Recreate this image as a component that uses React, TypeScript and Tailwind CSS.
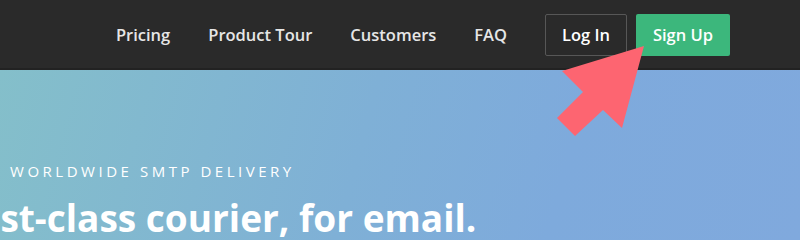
import React from 'react';

const navLinks = ['Pricing', 'Product Tour', 'Customers', 'FAQ'];

export default function App() {
  return (
    <div className="relative w-[800px] h-[240px] overflow-hidden font-['Open_Sans',sans-serif]">
      <header className="h-[70px] bg-[#2a2a2a] border-b-2 border-[#222222] flex items-center justify-end pr-[70px] pt-[2px]">
        <nav className="flex items-center gap-[38px] pt-[1px]">
          {navLinks.map((link) => (
            <a key={link} className="text-[16.5px] font-semibold text-[#e6e6e6] leading-none">
              {link}
            </a>
          ))}
        </nav>
        <div className="flex items-center gap-[9px] ml-[38px]">
          <button className="w-[82px] h-[42px] border border-[#575757] rounded-[2px] text-[16.5px] font-semibold text-white">
            Log In
          </button>
          <button className="w-[94px] h-[42px] bg-[#3cb77c] rounded-[2px] text-[16.5px] font-semibold text-white">
            Sign Up
          </button>
        </div>
      </header>

      <section className="h-[170px] bg-[linear-gradient(105deg,#84bfca_0%,#7fb0d6_45%,#7eaadc_70%,#80a9dd_100%)] pt-[91px]">
        <p className="pl-[10px] text-[15px] leading-[20px] tracking-[0.235em] text-white">
          WORLDWIDE SMTP DELIVERY
        </p>
        <h1 className="ml-[-48px] mt-[15px] text-[37px] leading-[44px] font-bold text-white whitespace-nowrap">
          First-class courier, for email.
        </h1>
      </section>

      <svg className="absolute left-0 top-0 pointer-events-none" width="800" height="240" viewBox="0 0 800 240">
        <polygon
          points="644,46 562,71 583,92 557,118 575,136 603,110 622,128"
          fill="#fd6571"
        />
      </svg>
    </div>
  );
}
